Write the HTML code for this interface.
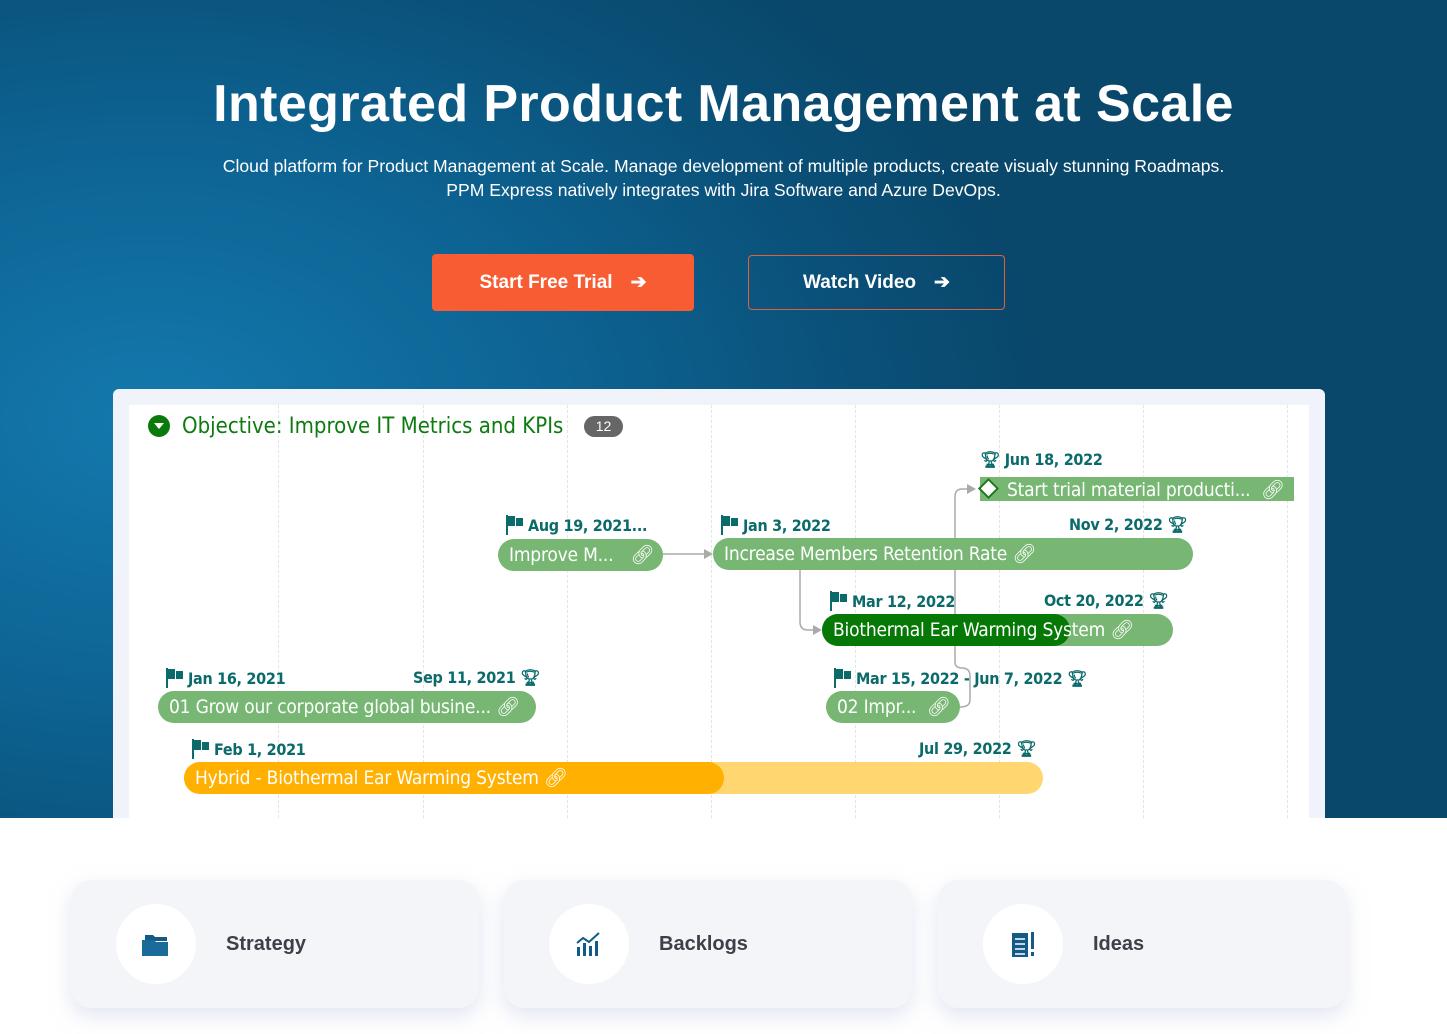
<!DOCTYPE html>
<html><head><meta charset="utf-8"><style>
*{margin:0;padding:0;box-sizing:border-box}
body{width:1447px;height:1034px;overflow:hidden;background:#fff;font-family:"Liberation Sans",sans-serif;position:relative}
.hero{position:absolute;left:0;top:0;width:1447px;height:818px;background:radial-gradient(ellipse 900px 600px at 150px 420px,#1479ad 0%,#0d6494 45%,#0a5078 80%,#09476b 100%)}
h1{position:absolute;top:74px;width:100%;text-align:center;color:#fff;font-size:52px;font-weight:700;letter-spacing:0.4px}
.sub{position:absolute;top:154px;width:100%;text-align:center;color:#fff;font-size:17.6px;line-height:24px}
.btn{position:absolute;top:254px;height:57px;border-radius:4px;color:#fff;font-weight:700;font-size:19px;display:flex;align-items:center;justify-content:center;gap:18px}
.panel{position:absolute;left:113px;top:389px;width:1212px;height:429px;background:#f1f3fa;border-radius:6px 6px 0 0}
.inner{position:absolute;left:129px;top:405px;width:1180px;height:413px;background:#fff;overflow:hidden}
.g{position:absolute;top:405px;height:413px;border-left:1px dashed #e4e4e4}
.bar{position:absolute;height:32px;border-radius:16px;background:#77b773;color:#fff;font-size:19px;line-height:32px;padding-left:11px;white-space:nowrap;font-family:"DejaVu Sans Condensed","Liberation Sans",sans-serif;letter-spacing:-0.2px}
.lb{position:absolute;color:#0b6a6a;font-size:16px;font-weight:700;white-space:nowrap;font-family:"DejaVu Sans Condensed","Liberation Sans",sans-serif;letter-spacing:-0.3px}
.fl{display:inline-block;width:18px;height:20px;vertical-align:-4px;margin-right:4px}
.card{position:absolute;top:880px;width:408px;height:128px;background:#f4f5f9;border-radius:20px;box-shadow:0 8px 20px rgba(200,205,230,.5)}
.circ{position:absolute;left:45px;top:24px;width:80px;height:80px;border-radius:50%;background:#fff;display:flex;align-items:center;justify-content:center}
.ct{position:absolute;left:155px;top:53px;font-size:20px;font-weight:700;color:#3d4048}
</style></head><body>
<svg width="0" height="0" style="position:absolute"><defs><symbol id="f" viewBox="0 0 18 20"><rect x="0" y="0" width="2" height="20" fill="#0b6a6a"/><rect x="2" y="1" width="7" height="10" fill="#0b6a6a"/><rect x="10" y="3" width="7" height="8" fill="#0b6a6a"/></symbol></defs></svg>
<div class="hero">
<h1>Integrated Product Management at Scale</h1>
<div class="sub">Cloud platform for Product Management at Scale. Manage development of multiple products, create visualy stunning Roadmaps.<br>PPM Express natively integrates with Jira Software and Azure DevOps.</div>
<div class="btn" style="left:432px;width:262px;background:#f85c33">Start Free Trial <span>➔</span></div>
<div class="btn" style="left:748px;width:257px;border:1px solid #e0603a;height:55px;top:255px">Watch Video <span>➔</span></div>
</div>
<div class="panel"></div>
<div class="inner"></div>
<div class="g" style="left:278px"></div><div class="g" style="left:423px"></div><div class="g" style="left:567px"></div><div class="g" style="left:711px"></div><div class="g" style="left:855px"></div><div class="g" style="left:999px"></div><div class="g" style="left:1143px"></div><div class="g" style="left:1287px"></div>

<svg style="position:absolute;left:0;top:0" width="1447" height="1034">
<circle cx="159" cy="426" r="11" fill="#0a7a0a"/><path d="M154 423h10l-5 6z" fill="#fff"/>
<g fill="none" stroke="#aaa" stroke-width="1.5">
<path d="M663 554H708"/><path d="M800 556V622Q800 630 808 630H816"/>
<path d="M970 489H962Q955 489 955 497V662Q955 668 962 668Q970 668 970 676V700Q970 707 960 707"/>
</g>
<g fill="#aaa"><path d="M704 549l9 5-9 5z"/><path d="M813 625l9 5-9 5z"/><path d="M967 484l9 5-9 5z"/></g>
</svg>
<div style="position:absolute;left:182px;top:414px;color:#0f7a0f;font-size:22px;font-family:'DejaVu Sans Condensed','Liberation Sans',sans-serif">Objective: Improve IT Metrics and KPIs</div>
<div style="position:absolute;left:584px;top:416px;width:39px;height:21px;border-radius:11px;background:#666;color:#fff;font-size:14px;text-align:center;line-height:21px">12</div>

<div class="bar" style="left:498px;top:539px;width:165px">Improve M... <span style="margin-left:12px">🔗︎</span></div>
<div class="bar" style="left:713px;top:538px;width:480px">Increase Members Retention Rate 🔗︎</div>
<div style="position:absolute;left:980px;top:477px;width:314px;height:24px;background:#77b773"></div>
<div style="position:absolute;left:981px;top:481px;width:15px;height:15px;background:#fff;border:2px solid #1a7a1a;transform:rotate(45deg)"></div>
<div class="bar" style="left:996px;top:474px;background:none;font-size:19px">Start trial material producti... &nbsp;🔗︎</div>
<div class="bar" style="left:822px;top:614px;width:351px;padding:0"><div style="position:absolute;left:0;top:0;width:248px;height:32px;background:#067806;border-radius:16px"></div><span style="position:relative;padding-left:11px">Biothermal Ear Warming System 🔗︎</span></div>
<div class="bar" style="left:158px;top:691px;width:378px">01 Grow our corporate global busine... 🔗︎</div>
<div class="bar" style="left:826px;top:691px;width:134px">02 Impr... &nbsp;🔗︎</div>
<div class="bar" style="left:184px;top:762px;width:859px;background:#ffd670;padding:0"><div style="position:absolute;left:0;top:0;width:540px;height:32px;background:#ffb000;border-radius:16px"></div><span style="position:relative;padding-left:11px">Hybrid - Biothermal Ear Warming System 🔗︎</span></div>

<div class="lb" style="left:506px;top:515px"><svg class="fl"><use href="#f"/></svg>Aug 19, 2021...</div>
<div class="lb" style="left:721px;top:515px"><svg class="fl"><use href="#f"/></svg>Jan 3, 2022</div>
<div class="lb" style="left:1069px;top:515px">Nov 2, 2022 🏆︎</div>
<div class="lb" style="left:980px;top:450px">🏆︎ Jun 18, 2022</div>
<div class="lb" style="left:830px;top:591px"><svg class="fl"><use href="#f"/></svg>Mar 12, 2022</div>
<div class="lb" style="left:1044px;top:591px">Oct 20, 2022 🏆︎</div>
<div class="lb" style="left:166px;top:668px"><svg class="fl"><use href="#f"/></svg>Jan 16, 2021</div>
<div class="lb" style="left:413px;top:668px">Sep 11, 2021 🏆︎</div>
<div class="lb" style="left:834px;top:668px"><svg class="fl"><use href="#f"/></svg>Mar 15, 2022 - Jun 7, 2022 🏆︎</div>
<div class="lb" style="left:192px;top:739px"><svg class="fl"><use href="#f"/></svg>Feb 1, 2021</div>
<div class="lb" style="left:919px;top:739px">Jul 29, 2022 🏆︎</div>

<div class="card" style="left:71px"><div class="circ"><svg width="30" height="26" viewBox="0 0 30 26"><path d="M4 4h8l2 2h12v4H4z" fill="#135a86"/><path d="M1 9h12l2 2h12v14H1z" fill="#1a6a9a"/></svg></div><div class="ct">Strategy</div></div>
<div class="card" style="left:504px"><div class="circ"><svg width="28" height="26" viewBox="0 0 28 26"><path d="M2 12l6-5 6 4 10-9" stroke="#135a86" stroke-width="2" fill="none"/><rect x="2" y="16" width="3" height="9" fill="#135a86"/><rect x="8" y="12" width="3" height="13" fill="#135a86"/><rect x="14" y="15" width="3" height="10" fill="#135a86"/><rect x="20" y="10" width="3" height="15" fill="#135a86"/></svg></div><div class="ct">Backlogs</div></div>
<div class="card" style="left:938px"><div class="circ"><svg width="28" height="28" viewBox="0 0 28 28"><rect x="3" y="3" width="16" height="24" fill="#135a86"/><path d="M6 9h10M6 14h10M6 19h10M6 24h10" stroke="#fff" stroke-width="1.5"/><rect x="22" y="2" width="3" height="17" fill="#135a86"/><rect x="22" y="22" width="3" height="4" fill="#135a86"/></svg></div><div class="ct">Ideas</div></div>
</body></html>
